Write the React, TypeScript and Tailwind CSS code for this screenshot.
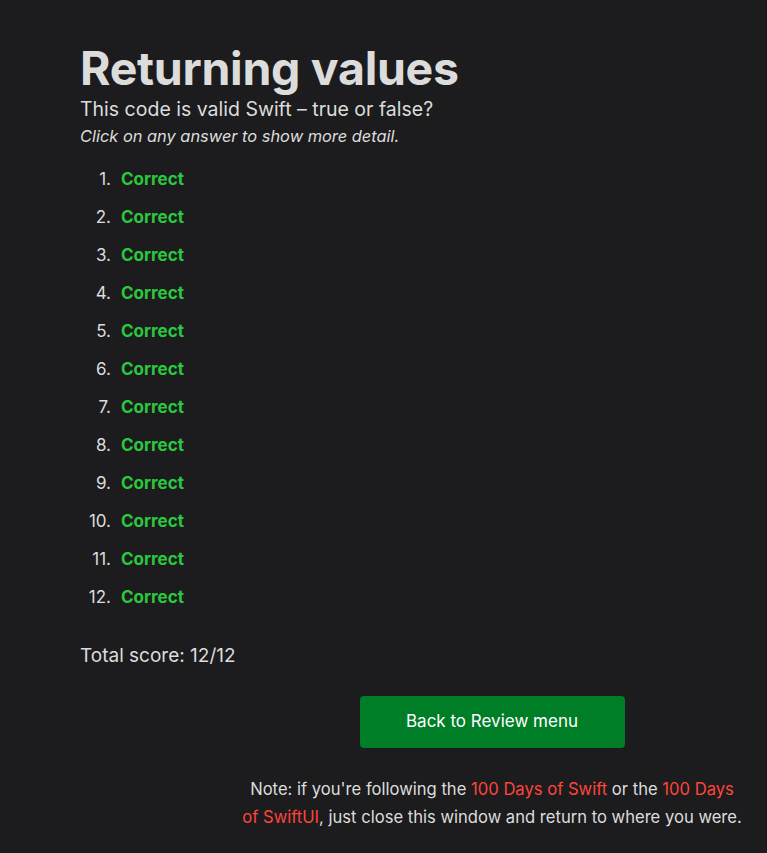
const ANSWERS = Array.from({ length: 12 }, (_, i) => i + 1);

export default function App() {
  return (
    <div className="min-h-[853px] bg-[#1c1c1e] text-[#dcdcdc] font-['Inter',sans-serif]">
      <div className="pl-[80px] pr-[25px] pt-[40px]">
        <h1 className="text-[46.5px] font-bold leading-[56px] tracking-[-0.3px] text-[#dcdcdc]">
          Returning values
        </h1>
        <p className="text-[19.5px] leading-[27px]">This code is valid Swift – true or false?</p>
        <p className="text-[16.4px] italic leading-[26px]">Click on any answer to show more detail.</p>

        <ol className="mt-[19px] flex flex-col gap-[16px]">
          {ANSWERS.map((n) => (
            <li key={n} className="flex items-center text-[17px] leading-[22px]">
              <span className="w-[31px] text-right">{n}.</span>
              <span className="ml-[10px] font-bold text-[#2ac83e]">Correct</span>
            </li>
          ))}
        </ol>

        <p className="mt-[35px] text-[19px] leading-[26px]">Total score: 12/12</p>

        <div className="mt-[27px] flex justify-end">
          <div className="flex w-[500px] flex-col items-center">
            <button
              type="button"
              className="h-[52px] w-[265px] rounded-[4px] bg-[#007d27] text-[17px] text-white"
            >
              Back to Review menu
            </button>
            <p className="mt-[27px] text-center text-[16.6px] leading-[28px]">
              Note: if you're following the{" "}
              <a className="text-[#ff453a]">100 Days of Swift</a> or the{" "}
              <a className="text-[#ff453a]">100 Days of SwiftUI</a>, just close this window and
              return to where you were.
            </p>
          </div>
        </div>
      </div>
    </div>
  );
}
